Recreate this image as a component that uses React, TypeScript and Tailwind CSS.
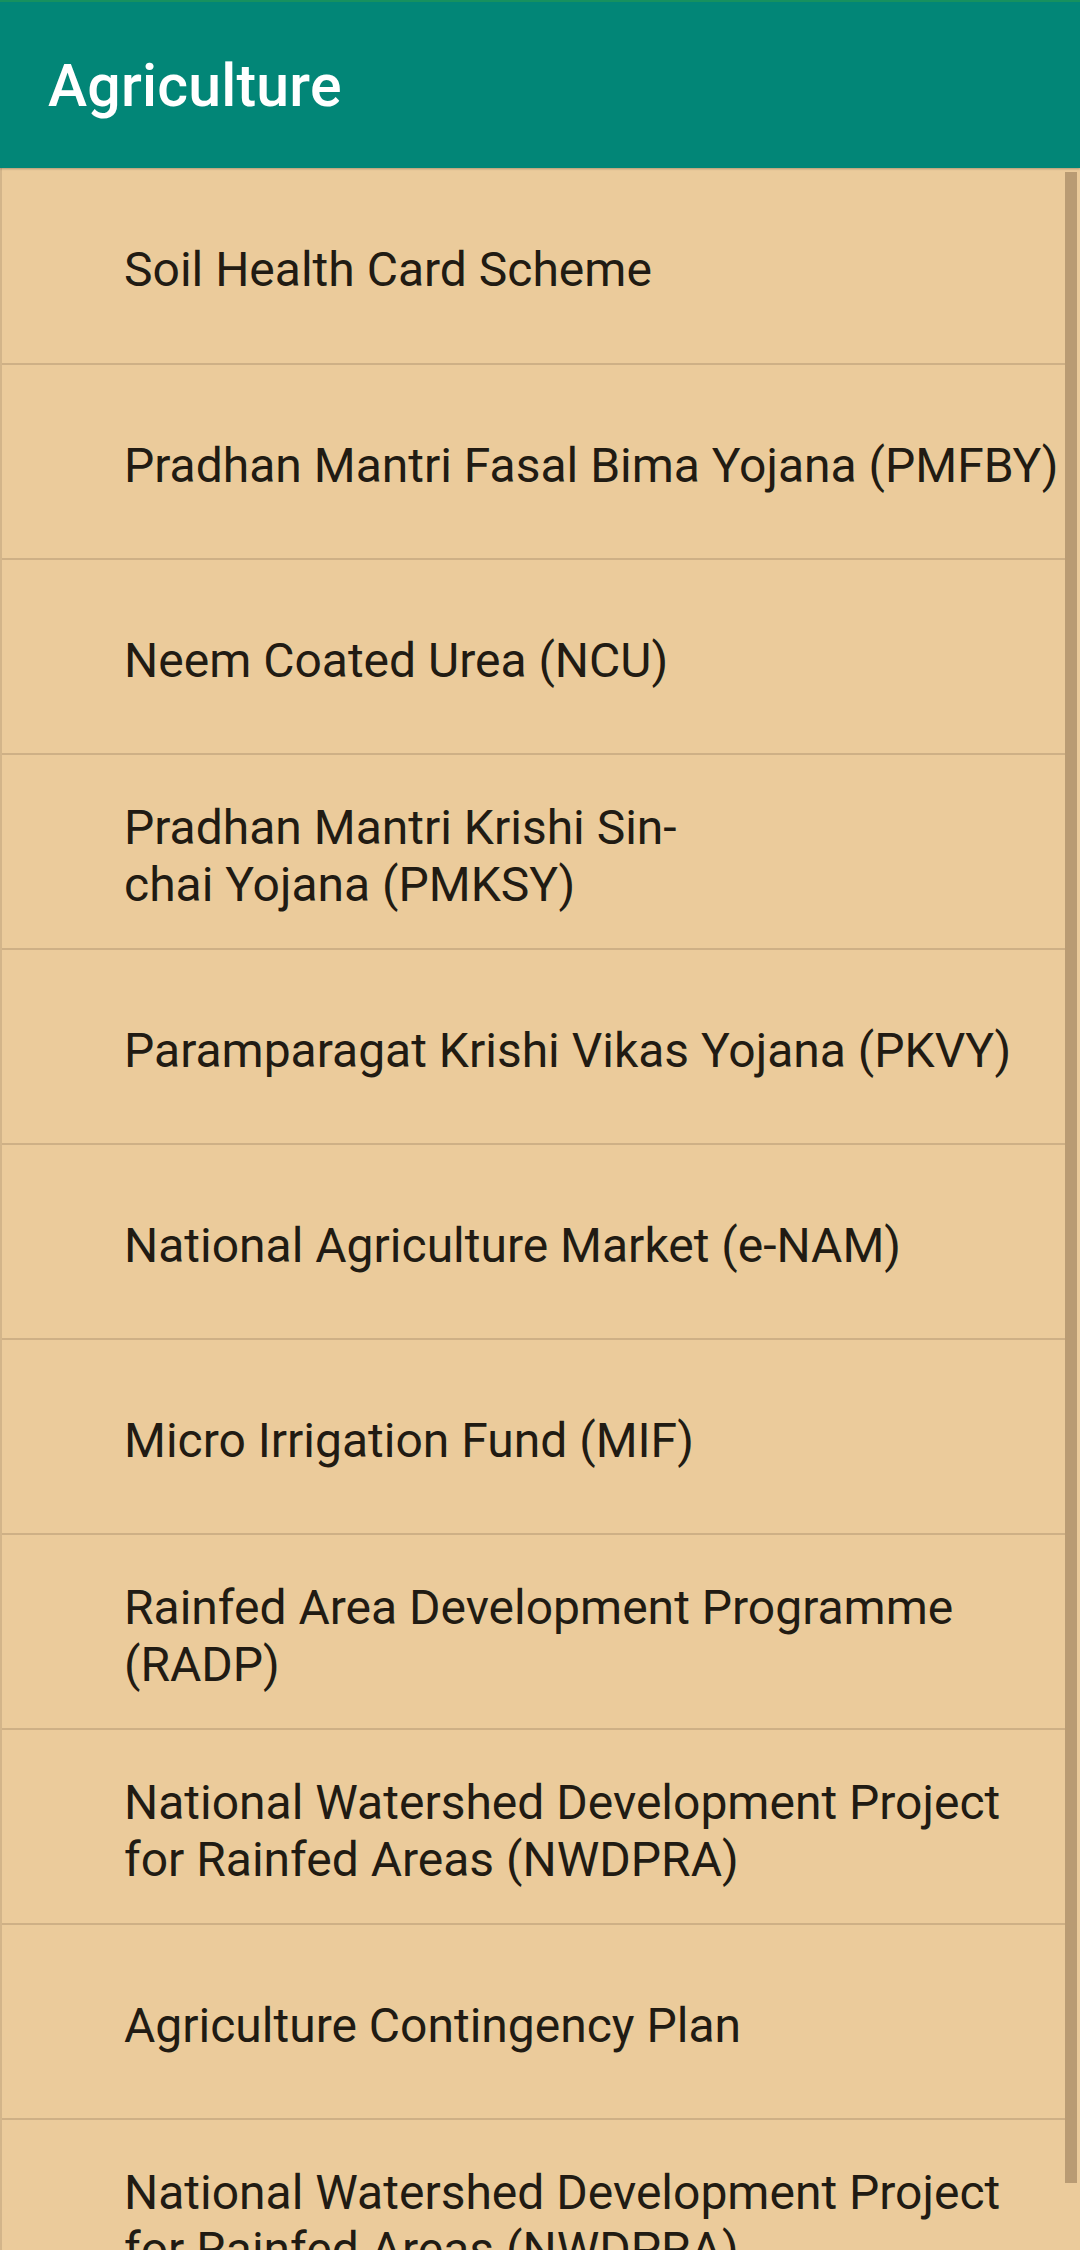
import React from "react";

const items: string[][] = [
  ["Soil Health Card Scheme"],
  ["Pradhan Mantri Fasal Bima Yojana (PMFBY)"],
  ["Neem Coated Urea (NCU)"],
  ["Pradhan Mantri Krishi Sin-", "chai Yojana (PMKSY)"],
  ["Paramparagat Krishi Vikas Yojana (PKVY)"],
  ["National Agriculture Market (e-NAM)"],
  ["Micro Irrigation Fund (MIF)"],
  ["Rainfed Area Development Programme", "(RADP)"],
  ["National Watershed Development Project", "for Rainfed Areas (NWDPRA)"],
  ["Agriculture Contingency Plan"],
  ["National Watershed Development Project", "for Rainfed Areas (NWDPRA)"],
];

export default function App() {
  return (
    <div
      className="w-[1080px] h-[2250px] overflow-hidden bg-[#ebcb9b] flex flex-col"
      style={{ fontFamily: "Roboto, 'Noto Sans', sans-serif" }}
    >
      <header className="h-[168px] shrink-0 bg-[#028677] border-t-2 border-[#17915f] flex items-center pl-[48px] shadow-[0_1px_2px_rgba(0,0,0,0.25)] relative z-10">
        <h1 className="text-white text-[59px] font-medium leading-none tracking-[0.2px]">
          Agriculture
        </h1>
      </header>
      <div className="relative flex-1 border-l-2 border-[#d3b58a]">
        <ul className="flex flex-col pr-[3px]">
          {items.map((lines, i) => (
            <li
              key={i}
              className={`h-[195px] shrink-0 flex flex-col justify-center pl-[122px] pt-[8px] text-[48px] leading-[57px] text-[#211b13] ${
                i > 0 ? "border-t-[2px] border-[#ceb086]" : ""
              }`}
            >
              {lines.map((l, j) => (
                <span key={j} className="whitespace-nowrap">
                  {l}
                </span>
              ))}
            </li>
          ))}
        </ul>
        <div className="absolute right-[3px] top-[4px] w-[12px] h-[2011px] bg-[#b99b73]" />
      </div>
    </div>
  );
}
